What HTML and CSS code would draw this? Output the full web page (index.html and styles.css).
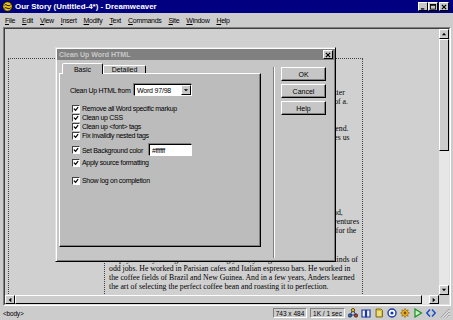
FILE: index.html
```html
<!DOCTYPE html>
<html lang="en">
<head>
    <meta charset="UTF-8">
    <meta name="viewport" content="width=device-width, initial-scale=1.0">
    <title>Our Story (Untitled-4*) - Dreamweaver</title>
    <link rel="stylesheet" href="styles.css">
</head>
<body>
    <div class="app">
        <div class="titlebar">
            <svg class="app-icon" viewBox="0 0 11 11">
                <circle cx="5.5" cy="5.5" r="4.8" fill="#e8c020" stroke="#000" stroke-width="1"/>
                <path d="M2.5 4.2 C4 2.4, 6 6.4, 8.6 3.8 M2.5 7.2 C4 5.4, 6 9.2, 8.6 6.8" fill="none" stroke="#000" stroke-width="1"/>
            </svg>
            <span class="title">Our Story (Untitled-4*) - Dreamweaver</span>
            <div class="win-btns">
                <span class="wbtn"><svg viewBox="0 0 7 7"><rect x="1" y="5" width="4" height="1.5" fill="#000"/></svg></span>
                <span class="wbtn"><svg viewBox="0 0 7 7"><rect x="0.5" y="0.5" width="6" height="5.5" fill="none" stroke="#000" stroke-width="1"/><rect x="0.5" y="0.5" width="6" height="1.5" fill="#000"/></svg></span>
                <span class="wbtn close"><svg viewBox="0 0 7 7"><path d="M1 1 L6 6 M6 1 L1 6" stroke="#000" stroke-width="1.4"/></svg></span>
            </div>
        </div>

        <div class="menubar">
            <span><u>F</u>ile</span>
            <span><u>E</u>dit</span>
            <span><u>V</u>iew</span>
            <span><u>I</u>nsert</span>
            <span><u>M</u>odify</span>
            <span><u>T</u>ext</span>
            <span><u>C</u>ommands</span>
            <span><u>S</u>ite</span>
            <span><u>W</u>indow</span>
            <span><u>H</u>elp</span>
        </div>

        <div class="workspace">
            <div class="docframe">
                <div class="docgrid">
                    <div class="doc">
                        <div class="page">
                            <div class="page-side"></div>
                            <div class="story">
                                <p class="para first">
                                    Anders Jensen was sixteen when he decided that coffee was no small matter<br>
                                    to be left to chance. Good coffee was always the true, patient, honest art of a.<br>
                                    true artisan.
                                </p>
                                <p class="para">
                                    Anders began his quest at home and pursued it all the way to the world's end.<br>
                                    Today, many years later, the same passion for a perfect roast is what drives us<br>
                                    every day.
                                </p>
                                <p class="para third">
                                    After school he left home with a small bag of clothes and a journal in hand,<br>
                                    and he then set out across Europe on the very first of his many coffee adventures<br>
                                    in search of the finest beans in the world and of all the people who cared for the<br>
                                    craft.
                                </p>
                                <p class="para fourth">
                                    To pay his way during all of those long years, young Anders took on all kinds of<br>
                                    odd jobs. He worked in Parisian cafes and Italian espresso bars. He worked in<br>
                                    the coffee fields of Brazil and New Guinea. And in a few years, Anders learned<br>
                                    the art of selecting the perfect coffee bean and roasting it to perfection.
                                </p>
                            </div>
                        </div>
                    </div>
                    <div class="vscroll">
                        <span class="sbtn"><svg viewBox="0 0 7 7"><path d="M3.5 2 L6 5 L1 5 Z" fill="#000"/></svg></span>
                        <span class="vthumb"></span>
                        <span class="track"></span>
                        <span class="sbtn"><svg viewBox="0 0 7 7"><path d="M1 2 L6 2 L3.5 5 Z" fill="#000"/></svg></span>
                    </div>
                    <div class="hscroll">
                        <span class="sbtn"><svg viewBox="0 0 7 7"><path d="M2 3.5 L5 1 L5 6 Z" fill="#000"/></svg></span>
                        <span class="hthumb"></span>
                        <span class="track"></span>
                        <span class="sbtn"><svg viewBox="0 0 7 7"><path d="M2 1 L5 3.5 L2 6 Z" fill="#000"/></svg></span>
                    </div>
                    <div class="corner"></div>
                </div>
            </div>
        </div>

        <div class="statusbar">
            <span class="tag">&lt;body&gt;</span>
            <span class="field size">743 x 484</span>
            <span class="field speed">1K / 1 sec</span>
            <div class="launcher">
                <!-- site -->
                <svg viewBox="0 0 10 10"><path d="M5 2 L2 7 M5 2 L8 7 M2 7 L8 7" stroke="#2040a0" stroke-width="1"/><circle cx="5" cy="2.2" r="1.7" fill="#f0c020" stroke="#000" stroke-width="0.6"/><circle cx="2" cy="7.5" r="1.7" fill="#3070d0" stroke="#000" stroke-width="0.6"/><circle cx="8" cy="7.5" r="1.7" fill="#d04030" stroke="#000" stroke-width="0.6"/></svg>
                <!-- library -->
                <svg viewBox="0 0 10 10"><path d="M1 2 H4.5 V9 H1 Z M5.5 2 H9 V9 H5.5 Z" fill="#f4f4f4" stroke="#1838a8" stroke-width="1.2"/><path d="M4.5 9 H5.5" stroke="#1838a8"/></svg>
                <!-- html styles -->
                <svg viewBox="0 0 10 10"><path d="M2 1 H7 L8.5 2.5 V9 H2 Z" fill="#d8c030" stroke="#6a5a10" stroke-width="0.8"/><path d="M4 3 V8 M6 3 V8" stroke="#fff" stroke-width="0.9"/></svg>
                <!-- css styles -->
                <svg viewBox="0 0 10 10"><circle cx="5" cy="5" r="4" fill="#fff" stroke="#1838a8" stroke-width="1.4"/><circle cx="5" cy="5" r="1.6" fill="#1838a8"/></svg>
                <!-- behaviors -->
                <svg viewBox="0 0 10 10"><path d="M5 0.5 L6 2.5 L8.2 1.8 L7.5 4 L9.5 5 L7.5 6 L8.2 8.2 L6 7.5 L5 9.5 L4 7.5 L1.8 8.2 L2.5 6 L0.5 5 L2.5 4 L1.8 1.8 L4 2.5 Z" fill="#f0b820" stroke="#8a6000" stroke-width="0.6"/><circle cx="5" cy="5" r="1.4" fill="#8a4a00"/></svg>
                <!-- timelines -->
                <svg viewBox="0 0 10 10"><path d="M2 1 L8.5 5 L2 9 Z" fill="#c8f0c0" stroke="#189020" stroke-width="1.2"/></svg>
                <!-- html source -->
                <svg viewBox="0 0 10 10"><path d="M4 1.5 L0.8 5 L4 8.5 M6 1.5 L9.2 5 L6 8.5" fill="none" stroke="#1850c8" stroke-width="1.5"/></svg>
            </div>
            <svg class="grip" viewBox="0 0 10 10"><path d="M9.5 1 L1 9.5 M9.5 4 L4 9.5 M9.5 7 L7 9.5" stroke="#808080" stroke-width="1"/><path d="M9.5 2 L2 9.5 M9.5 5 L5 9.5 M9.5 8 L8 9.5" stroke="#fff" stroke-width="0.8"/></svg>
        </div>

        <!-- Clean Up Word HTML dialog -->
        <div class="dialog">
            <div class="dlg-title">
                <span>Clean Up Word HTML</span>
                <span class="dlg-close"><svg viewBox="0 0 7 7"><path d="M1 1 L6 6 M6 1 L1 6" stroke="#000" stroke-width="1.4"/></svg></span>
            </div>
            <div class="dlg-body">
                <div class="tabs-area">
                    <div class="tabs">
                        <span class="tab active">Basic</span>
                        <span class="tab">Detailed</span>
                    </div>
                    <div class="panel">
                        <div class="from-row">
                            <span class="from-label">Clean Up HTML from</span>
                            <span class="select">
                                <span class="select-val">Word 97/98</span>
                                <span class="select-btn"><svg viewBox="0 0 7 7"><path d="M1 2.5 L6 2.5 L3.5 5 Z" fill="#000"/></svg></span>
                            </span>
                        </div>
                        <div class="opts">
                            <div class="opt"><span class="check"><svg viewBox="0 0 7 7"><path d="M1 3 L3 5 L6 1.2" fill="none" stroke="#000" stroke-width="1.4"/></svg></span>Remove all Word specific markup</div>
                            <div class="opt"><span class="check"><svg viewBox="0 0 7 7"><path d="M1 3 L3 5 L6 1.2" fill="none" stroke="#000" stroke-width="1.4"/></svg></span>Clean up CSS</div>
                            <div class="opt"><span class="check"><svg viewBox="0 0 7 7"><path d="M1 3 L3 5 L6 1.2" fill="none" stroke="#000" stroke-width="1.4"/></svg></span>Clean up &lt;font&gt; tags</div>
                            <div class="opt"><span class="check"><svg viewBox="0 0 7 7"><path d="M1 3 L3 5 L6 1.2" fill="none" stroke="#000" stroke-width="1.4"/></svg></span>Fix invalidly nested tags</div>
                            <div class="opt bg-row"><span class="check"><svg viewBox="0 0 7 7"><path d="M1 3 L3 5 L6 1.2" fill="none" stroke="#000" stroke-width="1.4"/></svg></span><span class="bg-label">Set Background color</span><span class="textbox">#ffffff</span></div>
                            <div class="opt apply"><span class="check"><svg viewBox="0 0 7 7"><path d="M1 3 L3 5 L6 1.2" fill="none" stroke="#000" stroke-width="1.4"/></svg></span>Apply source formatting</div>
                            <div class="opt log"><span class="check"><svg viewBox="0 0 7 7"><path d="M1 3 L3 5 L6 1.2" fill="none" stroke="#000" stroke-width="1.4"/></svg></span>Show log on completion</div>
                        </div>
                    </div>
                </div>
                <div class="dlg-sep"></div>
                <div class="dlg-buttons">
                    <span class="btn">OK</span>
                    <span class="btn">Cancel</span>
                    <span class="btn">Help</span>
                </div>
            </div>
        </div>
    </div>
</body>
</html>
```

FILE: styles.css
```css
/* General */
body {
    margin: 0;
    padding: 0;
    font-family: "Liberation Sans", Arial, sans-serif;
    font-size: 7px;
    color: #000;
    background-color: #cccccc;
    overflow: hidden;
}

svg {
    display: block;
}

.app {
    position: relative;
    width: 453px;
    height: 320px;
    display: flex;
    flex-direction: column;
    background-color: #cccccc;
}

/* Title bar */
.titlebar {
    height: 13px;
    flex: none;
    display: flex;
    align-items: center;
    padding: 0 4px 0 2px;
    background-color: #000080;
}

.app-icon {
    width: 11px;
    height: 11px;
}

.title {
    margin-left: 2px;
    color: #ffffff;
    font-weight: bold;
    font-size: 7.9px;
}

.win-btns {
    margin-left: auto;
    display: flex;
}

.wbtn {
    width: 10px;
    height: 9px;
    box-sizing: border-box;
    display: flex;
    align-items: center;
    justify-content: center;
    background-color: #c8c8c8;
    border: 1px solid;
    border-color: #ffffff #000000 #000000 #ffffff;
}

.wbtn svg {
    width: 6px;
    height: 6px;
}

.wbtn.close {
    margin-left: 1px;
}

/* Menu bar */
.menubar {
    height: 14px;
    flex: none;
    display: flex;
    align-items: center;
    gap: 7px;
    padding-left: 5px;
    letter-spacing: -0.3px;
}

/* Document window */
.workspace {
    flex: 1;
    display: flex;
    padding: 0 2px 0 3px;
    min-height: 0;
}

.docframe {
    flex: 1;
    display: flex;
    border: 1px solid;
    border-color: #808080 #ffffff #ffffff #808080;
}

.docgrid {
    flex: 1;
    display: grid;
    grid-template-columns: 1fr 10px;
    grid-template-rows: 1fr 9px;
    border: 1px solid;
    border-color: #404040 #dfdfdf #dfdfdf #404040;
    min-height: 0;
}

.doc {
    background-color: #d0d0d0;
    overflow: hidden;
}

.page {
    display: flex;
    margin: 29px 0 0 3px;
    width: 355px;
    height: 300px;
    box-sizing: border-box;
    border: 1px dotted #404040;
    border-bottom: none;
}

.page-side {
    width: 95px;
}

.story {
    flex: 1;
    border-left: 1px dotted #404040;
    padding: 29px 0 0 4px;
    font-family: "Liberation Serif", "Times New Roman", serif;
    font-size: 7.75px;
    line-height: 9px;
    white-space: nowrap;
}

.para {
    margin: 0;
}

.para + .para {
    margin-top: 9px;
}

.para.third {
    margin-top: 57px;
}

.para.fourth {
    margin-top: 11px;
}

/* Scrollbars */
.vscroll {
    display: flex;
    flex-direction: column;
    background-color: #e6e6e6;
}

.hscroll {
    display: flex;
    background-color: #e6e6e6;
}

.sbtn {
    width: 10px;
    height: 9px;
    flex: none;
    box-sizing: border-box;
    display: flex;
    align-items: center;
    justify-content: center;
    background-color: #cccccc;
    border: 1px solid;
    border-color: #ffffff #000000 #000000 #ffffff;
}

.vscroll .sbtn {
    height: 10px;
}

.sbtn svg {
    width: 6px;
    height: 6px;
}

.vthumb {
    height: 112px;
    flex: none;
    box-sizing: border-box;
    background-color: #cccccc;
    border: 1px solid;
    border-color: #ffffff #000000 #000000 #ffffff;
}

.hthumb {
    width: 407px;
    flex: none;
    box-sizing: border-box;
    background-color: #cccccc;
    border: 1px solid;
    border-color: #ffffff #000000 #000000 #ffffff;
}

.track {
    flex: 1;
}

.corner {
    background-color: #cccccc;
}

/* Status bar */
.statusbar {
    height: 14px;
    flex: none;
    display: flex;
    align-items: center;
    padding: 0 3px 0 3px;
    font-size: 6.5px;
}

.tag {
    letter-spacing: -0.2px;
}

.field {
    height: 10px;
    box-sizing: border-box;
    display: flex;
    align-items: center;
    justify-content: center;
    border: 1px solid;
    border-color: #808080 #ffffff #ffffff #808080;
}

.field.size {
    margin-left: auto;
    width: 34px;
}

.field.speed {
    margin-left: 3px;
    width: 35px;
}

.launcher {
    display: flex;
    gap: 3px;
    margin-left: 3px;
}

.launcher svg {
    width: 10px;
    height: 10px;
}

.grip {
    width: 10px;
    height: 10px;
    margin-left: 4px;
}

/* Dialog */
.dialog {
    position: absolute;
    left: 55px;
    top: 47px;
    width: 281px;
    height: 215px;
    box-sizing: border-box;
    padding: 1px;
    background-color: #c6c6c6;
    border: 1px solid;
    border-color: #dfdfdf #000000 #000000 #dfdfdf;
    box-shadow: inset 1px 1px #ffffff, inset -1px -1px #808080;
    display: flex;
    flex-direction: column;
}

.dlg-title {
    height: 11px;
    display: flex;
    align-items: center;
    padding-left: 2px;
    background-color: #808080;
    color: #c8c8c8;
    font-weight: bold;
}

.dlg-close {
    margin-left: auto;
    margin-right: 1px;
    width: 10px;
    height: 9px;
    box-sizing: border-box;
    display: flex;
    align-items: center;
    justify-content: center;
    background-color: #c8c8c8;
    border: 1px solid;
    border-color: #ffffff #000000 #000000 #ffffff;
}

.dlg-close svg {
    width: 6px;
    height: 6px;
}

.dlg-body {
    flex: 1;
    display: flex;
    padding: 3px 0 0 2px;
}

.tabs-area {
    width: 202px;
}

.tabs {
    height: 10px;
    display: flex;
    align-items: flex-end;
    padding-left: 3px;
}

.tab {
    height: 8px;
    display: flex;
    align-items: center;
    justify-content: center;
    width: 43px;
    box-sizing: border-box;
    border: 1px solid;
    border-bottom: none;
    border-color: #ffffff #000000 transparent #ffffff;
    border-radius: 2px 2px 0 0;
}

.tab.active {
    width: 41px;
    height: 11px;
    margin-bottom: -1px;
    background-color: #bcbcbc;
    position: relative;
    z-index: 1;
}

.panel {
    height: 174px;
    box-sizing: border-box;
    padding: 10px 0 0 10px;
    background-color: #bcbcbc;
    border: 1px solid;
    border-color: #ffffff #000000 #000000 #ffffff;
    box-shadow: inset -1px -1px #808080;
}

.from-row {
    display: flex;
    align-items: center;
    height: 12px;
    letter-spacing: -0.3px;
}

.from-label {
    width: 64px;
}

.select {
    width: 58px;
    height: 12px;
    box-sizing: border-box;
    display: flex;
    align-items: center;
    background-color: #ffffff;
    border: 1px solid;
    border-color: #000000 #ffffff #ffffff #000000;
    box-shadow: -1px -1px #808080;
    letter-spacing: -0.2px;
}

.select-val {
    flex: 1;
    padding-left: 2px;
}

.select-btn {
    width: 10px;
    height: 10px;
    box-sizing: border-box;
    display: flex;
    align-items: center;
    justify-content: center;
    background-color: #c8c8c8;
    border: 1px solid;
    border-color: #ffffff #000000 #000000 #ffffff;
}

.select-btn svg {
    width: 6px;
    height: 6px;
}

.opts {
    margin-top: 8px;
    padding-left: 2px;
    letter-spacing: -0.3px;
}

.opt {
    height: 9px;
    display: flex;
    align-items: center;
}

.check {
    width: 8px;
    height: 8px;
    box-sizing: border-box;
    margin-right: 2px;
    display: flex;
    align-items: center;
    justify-content: center;
    background-color: #ffffff;
    border: 1px solid;
    border-color: #404040 #ffffff #ffffff #404040;
}

.check svg {
    width: 6px;
    height: 6px;
}

.opt.bg-row {
    height: 12px;
    margin-top: 4px;
}

.bg-label {
    width: 67px;
}

.textbox {
    width: 43px;
    height: 12px;
    box-sizing: border-box;
    display: flex;
    align-items: center;
    padding-left: 2px;
    background-color: #ffffff;
    border: 1px solid;
    border-color: #000000 #ffffff #ffffff #000000;
    box-shadow: -1px -1px #808080;
}

.opt.apply {
    margin-top: 2px;
}

.opt.log {
    margin-top: 9px;
}

.dlg-sep {
    width: 0;
    height: 191px;
    margin: 4px 0 0 12px;
    border-left: 1px solid #808080;
    border-right: 1px solid #ffffff;
}

.dlg-buttons {
    display: flex;
    flex-direction: column;
    gap: 3px;
    margin: 4px 0 0 6px;
}

.btn {
    width: 45px;
    height: 14px;
    box-sizing: border-box;
    display: flex;
    align-items: center;
    justify-content: center;
    background-color: #c6c6c6;
    border: 1px solid;
    border-color: #ffffff #000000 #000000 #ffffff;
    box-shadow: inset -1px -1px #808080;
}
```
